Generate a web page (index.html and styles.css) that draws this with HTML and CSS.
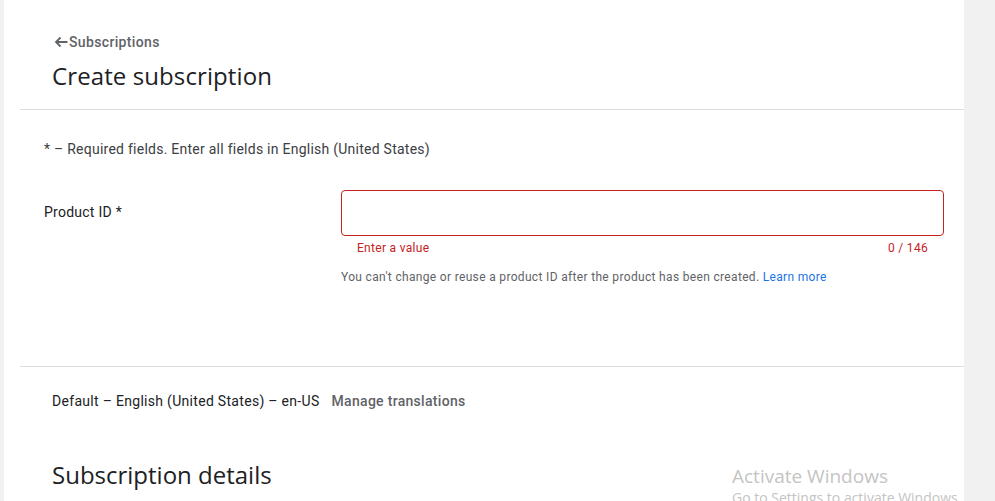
FILE: index.html
```html
<!DOCTYPE html>
<html lang="en">
<head>
<meta charset="utf-8">
<title>Create subscription</title>
<link rel="stylesheet" href="styles.css">
</head>
<body>
<div class="page">
  <header class="header">
    <a class="crumb" href="#"><svg class="arrow" width="14" height="12" viewBox="0 0 14 12" aria-hidden="true"><path d="M13.5 6H2M6.5 1.5L2 6l4.5 4.5" fill="none" stroke="#5f6368" stroke-width="1.8"/></svg>Subscriptions</a>
    <h1 class="title">Create subscription</h1>
  </header>
  <hr class="divider">
  <section class="form">
    <p class="note">* – Required fields. Enter all fields in English (United States)</p>
    <div class="row">
      <label class="label">Product ID *</label>
      <div class="field">
        <div class="input"></div>
        <div class="hints">
          <span class="error">Enter a value</span>
          <span class="count">0 / 146</span>
        </div>
        <p class="helper">You can't change or reuse a product ID after the product has been created. <a href="#" class="link">Learn more</a></p>
      </div>
    </div>
  </section>
  <hr class="divider">
  <section class="lang">
    <span class="lang-text">Default – English (United States) – en-US</span>
    <a href="#" class="manage">Manage translations</a>
  </section>
  <h2 class="subtitle">Subscription details</h2>
  <div class="watermark">
    <div class="wm-title">Activate Windows</div>
    <div class="wm-sub">Go to Settings to activate Windows.</div>
  </div>
</div>
</body>
</html>
```
FILE: styles.css
```css
html, body {
  margin: 0;
  padding: 0;
  background: #f1f1f1;
  font-family: Roboto, "Liberation Sans", Arial, sans-serif;
  color: #202124;
}
.page {
  position: relative;
  margin-left: 4px;
  width: 960px;
  height: 501px;
  background: #ffffff;
  overflow: hidden;
}
.header {
  padding: 33px 0 0 48px;
  height: 109px;
  box-sizing: border-box;
}
.crumb {
  display: flex;
  align-items: center;
  font-family: Roboto, sans-serif;
  font-size: 14px;
  font-weight: 500;
  letter-spacing: 0.35px;
  color: #5f6368;
  text-decoration: none;
  line-height: 18px;
}
.arrow {
  margin: 0 1px 0 2px;
  display: block;
}
.title {
  margin: 10px 0 0 0;
  font-family: "Open Sans", Roboto, sans-serif;
  font-size: 24px;
  font-weight: 500;
  line-height: 30px;
  letter-spacing: 0.1px;
  color: #202124;
}
.divider {
  margin: 0 0 0 16px;
  border: 0;
  border-top: 1px solid #dadce0;
  height: 0;
}
.form {
  padding: 29px 20px 0 40px;
  height: 256px;
  box-sizing: border-box;
}
.note {
  margin: 0;
  font-size: 14px;
  line-height: 20px;
  letter-spacing: 0.25px;
  color: #3c4043;
}
.row {
  display: flex;
  margin-top: 31px;
}
.label {
  width: 297px;
  font-size: 14px;
  line-height: 20px;
  letter-spacing: 0.25px;
  color: #202124;
  padding-top: 12px;
}
.field {
  flex: 1;
}
.input {
  height: 46px;
  box-sizing: border-box;
  border: 1px solid #c5221f;
  border-radius: 4px;
}
.hints {
  display: flex;
  justify-content: space-between;
  padding: 4px 16px 0 16px;
  font-size: 12px;
  line-height: 16px;
  color: #c5221f;
  letter-spacing: 0.3px;
}
.helper {
  margin: 13px 0 0 0;
  font-size: 12px;
  line-height: 16px;
  color: #5f6368;
  letter-spacing: 0.33px;
}
.link {
  color: #1a73e8;
  text-decoration: none;
}
.lang {
  padding: 24px 0 0 48px;
  display: flex;
  gap: 12px;
  font-size: 14px;
  line-height: 20px;
  letter-spacing: 0.3px;
}
.lang-text {
  color: #202124;
}
.manage {
  color: #5f6368;
  font-weight: 500;
  text-decoration: none;
}
.subtitle {
  margin: 49px 0 0 48px;
  font-family: "Open Sans", Roboto, sans-serif;
  font-size: 24px;
  font-weight: 500;
  line-height: 30px;
  letter-spacing: 0;
  color: #202124;
}
.watermark {
  position: absolute;
  left: 728px;
  top: 463px;
  color: #c4c4c4;
  font-family: "Open Sans", "Noto Sans", sans-serif;
  white-space: nowrap;
}
.wm-title {
  font-size: 19px;
  line-height: 26px;
}
.wm-sub {
  font-size: 14px;
  line-height: 18px;
}
```
